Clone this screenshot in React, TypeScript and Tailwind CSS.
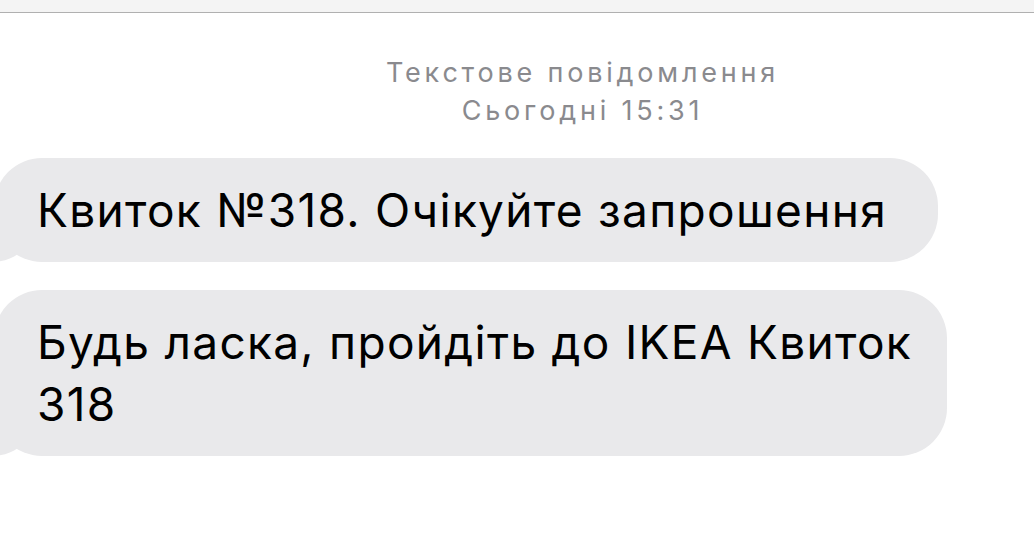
const font = { fontFamily: 'Inter, "Liberation Sans", Arial, sans-serif' };

function Tail() {
  return (
    <svg
      className="absolute bottom-0 left-[-14px]"
      width="70"
      height="50"
      viewBox="0 0 70 50"
    >
      <path
        d="M14 5 L14 33 C14 42 11 47 6 50 C18 51 30 48 38 42 L60 40 L60 5 Z"
        fill="#e9e9eb"
      />
    </svg>
  );
}

function Bubble({ width, children }: { width: string; children: React.ReactNode }) {
  return (
    <div className={`relative ml-[-6px] ${width}`}>
      <Tail />
      <div className="relative rounded-[48px] bg-[#e9e9eb] pl-[43px] pr-[30px] pt-[21px] pb-[21px] text-[46px] leading-[62px] tracking-[1.3px] text-black">
        {children}
      </div>
    </div>
  );
}

export default function App() {
  return (
    <div className="min-h-screen bg-white overflow-hidden" style={font}>
      <div className="h-[13px] bg-[#f4f4f4] border-b border-[#b0b0b0]" />
      <div className="mt-[41px] flex flex-col items-center pl-[131px] text-[27px] leading-[38px] tracking-[3.8px] text-[#8a8a8e]">
        <div>Текстове повідомлення</div>
        <div>Сьогодні 15:31</div>
      </div>
      <div className="mt-[28px] flex flex-col gap-[28px]">
        <Bubble width="w-[944px]">Квиток №318. Очікуйте запрошення</Bubble>
        <Bubble width="w-[953px]">
          Будь ласка, пройдіть до IKEA Квиток
          <br />
          318
        </Bubble>
      </div>
    </div>
  );
}
